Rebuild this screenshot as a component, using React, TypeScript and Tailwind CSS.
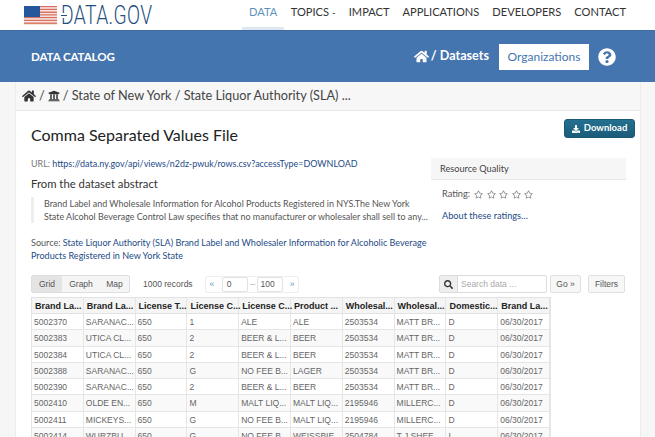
import { FaHome, FaUniversity, FaQuestionCircle, FaDownload, FaSearch, FaRegStar } from "react-icons/fa";

const headers = ["Brand La...", "Brand La...", "License T...", "License C...", "License C...", "Product ...", "Wholesal...", "Wholesal...", "Domestic...", "Brand La..."];
const rows = [
  ["5002370", "SARANAC...", "650", "1", "ALE", "ALE", "2503534", "MATT BR...", "D", "06/30/2017"],
  ["5002383", "UTICA CL...", "650", "2", "BEER & L...", "BEER", "2503534", "MATT BR...", "D", "06/30/2017"],
  ["5002384", "UTICA CL...", "650", "2", "BEER & L...", "BEER", "2503534", "MATT BR...", "D", "06/30/2017"],
  ["5002388", "SARANAC...", "650", "G", "NO FEE B...", "LAGER", "2503534", "MATT BR...", "D", "06/30/2017"],
  ["5002390", "SARANAC...", "650", "2", "BEER & L...", "BEER", "2503534", "MATT BR...", "D", "06/30/2017"],
  ["5002410", "OLDE EN...", "650", "M", "MALT LIQ...", "MALT LIQ...", "2195946", "MILLERC...", "D", "06/30/2017"],
  ["5002411", "MICKEYS...", "650", "G", "NO FEE B...", "MALT LIQ...", "2195946", "MILLERC...", "D", "06/30/2017"],
  ["5002414", "WURZBU...", "650", "G", "NO FEE B...", "WEISSBIE...", "2504784", "T J SHEE...", "I", "06/30/2017"],
];
const nav = ["DATA", "TOPICS", "IMPACT", "APPLICATIONS", "DEVELOPERS", "CONTACT"];

function Flag() {
  return (
    <svg width="33" height="19" viewBox="0 0 33 19" className="shrink-0">
      {[0, 1, 2, 3, 4, 5, 6].map((i) => (
        <g key={i}>
          <rect x="0" y={i * 2.74} width="33" height="1.5" fill="#d9705f" />
          <rect x="0" y={i * 2.74 + 1.5} width="33" height="1.24" fill="#f4e4e0" />
        </g>
      ))}
      <rect x="0" y="0" width="16" height="11" fill="#24579c" />
    </svg>
  );
}

function Stars() {
  return (
    <span className="flex gap-[3.5px] ml-[4px] text-[#8a8a8a] text-[9px]">
      {[0, 1, 2, 3, 4].map((i) => (
        <FaRegStar key={i} />
      ))}
    </span>
  );
}

export default function App() {
  return (
    <div className="w-[655px] h-[437px] overflow-hidden bg-[#f6f6f6] text-[#444] font-['Lato','Noto_Sans',sans-serif]">
      <header className="h-[30px] bg-white flex items-center pl-[24px] relative">
        <Flag />
        <div className="ml-[4px] relative w-[92px] h-[25px]">
          <div className="text-[#1f4f80] font-['Roboto',sans-serif] font-light text-[25px] leading-[25px] whitespace-nowrap origin-left scale-x-[0.77] tracking-[0.5px]">
            DATA.GOV
          </div>
          <span className="absolute left-[1px] top-[10px] w-[4px] h-[5px] bg-white" />
          <span className="absolute left-0 top-[12px] w-[6px] h-[1px] bg-[#1f4f80]" />
        </div>
        <nav className="absolute left-[242px] top-0 flex h-[30px] text-[11.1px] text-[#333]">
          {nav.map((n, i) => (
            <div
              key={n}
              className={
                i === 0
                  ? "px-[7px] h-[30px] pt-[4px] text-[#5f93bd] border-b-[3px] border-[#dfe8f0]"
                  : "px-[6.5px] h-[30px] pt-[4px]"
              }
            >
              {n}
              {n === "TOPICS" && <span className="ml-[3px] text-[10px]">-</span>}
            </div>
          ))}
        </nav>
      </header>
      <div className="h-[52px] bg-[#4575af] border-t border-[#3d6a9f] flex items-center text-white relative">
        <div className="ml-[31px] text-[11.6px] font-bold tracking-[-0.1px]">DATA CATALOG</div>
        <div className="ml-auto flex items-center mr-[39px]">
          <FaHome className="text-[15px]" />
          <span className="ml-[2px] text-[12.6px] font-bold">/ Datasets</span>
          <div className="ml-[10px] w-[90px] h-[26px] bg-white text-[#4575af] text-[12px] flex items-center justify-center">Organizations</div>
          <FaQuestionCircle className="ml-[9px] text-[18px]" />
        </div>
      </div>
      <main className="mx-[15px] w-[626px] h-[355px] bg-white border-x border-[#ececec]">
        <div className="h-[29px] bg-[#f7f7f7] border-b border-[#e6e6e6] flex items-center pl-[6px] text-[12.7px] text-[#444]">
          <FaHome className="text-[14px] text-[#333]" />
          <span className="mx-[3px]">/</span>
          <FaUniversity className="text-[12px] text-[#333]" />
          <span className="ml-[3px]">/ State of New York / State Liquor Authority (SLA) ...</span>
        </div>
        <div className="flex pl-[15px]">
          <div className="w-[400px] shrink-0">
            <h1 className="mt-[11px] text-[#222] text-[16px] leading-[26px] whitespace-nowrap">Comma Separated Values File</h1>
            <p className="mt-[9px] text-[8.95px] leading-[14px] whitespace-nowrap text-[#777]">
              URL: <span className="text-[#234a86]">https://data.ny.gov/api/views/n2dz-pwuk/rows.csv?accessType=DOWNLOAD</span>
            </p>
            <h2 className="mt-[5px] text-[11.3px] leading-[16px] text-[#333]">From the dataset abstract</h2>
            <blockquote className="mt-[5px] border-l-[3px] border-[#eeeeee] pl-[10px] text-[8.95px] leading-[13px] text-[#555] whitespace-nowrap">
              Brand Label and Wholesale Information for Alcohol Products Registered in NYS.The New York
              <br />
              State Alcohol Beverage Control Law specifies that no manufacturer or wholesaler shall sell to any...
            </blockquote>
            <p className="mt-[13px] text-[9.05px] leading-[13px] text-[#555] whitespace-nowrap">
              Source: <span className="text-[#234a86]">State Liquor Authority (SLA) Brand Label and Wholesaler Information for Alcoholic Beverage</span>
              <br />
              <span className="text-[#234a86]">Products Registered in New York State</span>
            </p>
          </div>
          <div className="w-[204px] shrink-0">
            <div className="flex justify-end mt-[8px]">
              <div className="w-[71px] h-[19px] rounded-[3px] bg-linear-to-b from-[#24708f] to-[#1a5c7a] border border-[#195a77] text-white text-[9.5px] font-bold flex items-center justify-center gap-[4px]">
                <FaDownload className="text-[8px]" />
                Download
              </div>
            </div>
            <div className="mt-[20px] w-[195px] h-[22px] bg-[#f6f6f6] border-b border-[#e8e8e8] flex items-center pl-[9px] text-[9.2px] text-[#444]">Resource Quality</div>
            <div className="mt-[7px] pl-[11px] text-[9.2px] leading-[14px] flex items-center text-[#555]">
              Rating:
              <Stars />
            </div>
            <div className="mt-[8px] pl-[11px] text-[9.2px] leading-[14px] text-[#234a86]">About these ratings…</div>
          </div>
        </div>
        <div className="mt-[13px] px-[15px] flex items-center h-[18px] text-[8.5px] font-['Liberation_Sans',sans-serif] text-[#555] relative">
          <div className="flex h-[18px] rounded-[2px] border border-[#dedede] bg-[#f5f5f5]">
            <div className="w-[30px] bg-[#e4e4e4] flex items-center justify-center">Grid</div>
            <div className="w-[38px] flex items-center justify-center">Graph</div>
            <div className="w-[29px] flex items-center justify-center">Map</div>
          </div>
          <span className="ml-[13px] w-[62px]">1000 records</span>
          <div className="flex h-[17px] items-center border border-[#eeeeee] rounded-[2px] w-[94px]">
            <span className="w-[12px] text-center text-[#5aa0c8]">«</span>
            <div className="ml-[4px] w-[26px] h-[15px] border border-[#e2e2e2] rounded-[2px] pl-[4px] leading-[13px]">0</div>
            <span className="w-[10px] text-center text-[#aaa]">–</span>
            <div className="w-[26px] h-[15px] border border-[#e2e2e2] rounded-[2px] pl-[2px] leading-[13px]">100</div>
            <span className="ml-[3px] w-[12px] text-center text-[#5aa0c8]">»</span>
          </div>
          <div className="ml-auto flex items-center">
            <div className="flex h-[18px] w-[108px] border border-[#dcdcdc] rounded-[2px]">
              <div className="w-[18px] bg-[#eeeeee] border-r border-[#dcdcdc] flex items-center justify-center">
                <FaSearch className="text-[9px] text-[#333]" />
              </div>
              <div className="flex-1 pl-[3px] leading-[16px] text-[#aaa]">Search data ...</div>
            </div>
            <div className="ml-[3px] w-[31px] h-[18px] border border-[#e0e0e0] bg-[#f7f7f7] rounded-[2px] flex items-center justify-center">Go »</div>
            <div className="ml-[7px] w-[37px] h-[18px] border border-[#e0e0e0] bg-[#f7f7f7] rounded-[2px] flex items-center justify-center">Filters</div>
          </div>
        </div>
        <div className="ml-[15px] mt-[4px] w-[520px] font-['Liberation_Sans',sans-serif] text-[8.5px]">
          <div className="grid grid-cols-10 h-[17px] bg-[#f5f5f5] border border-[#e2e2e2] font-bold text-[#222] text-[9px]">
            {headers.map((h, i) => (
              <div key={i} className="px-[3px] leading-[16px] border-r border-[#e6e6e6] whitespace-nowrap">{h}</div>
            ))}
          </div>
          {rows.map((r, ri) => (
            <div key={ri} className={"grid grid-cols-10 h-[16.25px] border-x border-b border-[#e6e6e6] text-[#666] " + (ri % 2 ? "bg-[#f9f9f9]" : "bg-white")}>
              {r.map((c, i) => (
                <div key={i} className="px-[2px] leading-[17px] border-r border-[#e6e6e6] whitespace-nowrap">{c}</div>
              ))}
            </div>
          ))}
        </div>
      </main>
    </div>
  );
}
